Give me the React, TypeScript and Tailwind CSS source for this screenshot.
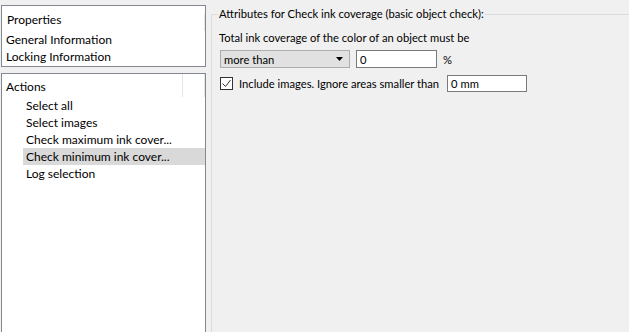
import React from "react";

const actions = [
  "Select all",
  "Select images",
  "Check maximum ink cover...",
  "Check minimum ink cover...",
  "Log selection",
];

export default function App() {
  return (
    <div className="w-[629px] h-[332px] bg-[#f0f0f0] flex overflow-hidden text-[12px] text-black font-['Lato',sans-serif] leading-[17px]">
      {/* Left column */}
      <div className="w-[206px] shrink-0 pl-px pt-[5px] flex flex-col gap-[6px]">
        <div className="h-[62px] bg-white border border-[#828790] relative">
          <div className="absolute right-0 top-[8px] h-[17px] w-px bg-[#e5e5e5]" />
          <div className="pl-[5px] pt-[5px]">Properties</div>
          <div className="pl-[4px] pt-[3px]">General Information</div>
          <div className="pl-[4px]">Locking Information</div>
        </div>
        <div className="flex-1 bg-white border border-b-0 border-[#828790]">
          <div className="flex h-[23px]">
            <div className="w-[181px] pl-[4px] pt-[4px] border-r border-[#e5e5e5]">Actions</div>
            <div className="flex-1 border-r border-[#e5e5e5]" />
          </div>
          <div className="flex flex-col">
            {actions.map((a, i) => (
              <div
                key={a}
                className={`ml-[21px] pl-[3px] h-[17px] leading-[18px] ${i === 3 ? "bg-[#d9d9d9]" : ""}`}
              >
                {a}
              </div>
            ))}
          </div>
        </div>
      </div>

      {/* Right side */}
      <div className="flex-1 pl-[5px] pt-[6px] text-[11.2px]">
        <fieldset className="w-[500px] h-[400px] border-t border-l border-[#dcdcdc] pl-[6px]">
          <legend className="px-px leading-[16px]">Attributes for Check ink coverage (basic object check):</legend>
          <div className="pl-[1px] pt-[7px]">Total ink coverage of the color of an object must be</div>
          <div className="flex items-center mt-[4px] ml-[2px]">
            <div className="w-[130px] h-[18px] bg-[#e1e1e1] border border-[#adadad] flex items-center justify-between pl-[3px] pr-[6px]">
              <span>more than</span>
              <svg width="7" height="4" viewBox="0 0 7 4">
                <path d="M0 0h7L3.5 4z" fill="#000" />
              </svg>
            </div>
            <div className="ml-[6px] w-[81px] h-[18px] bg-white border border-[#7a7a7a] pl-[3px] flex items-center">0</div>
            <span className="ml-[6px]">%</span>
          </div>
          <div className="flex items-center mt-[7px] ml-[2px]">
            <div className="w-[13px] h-[13px] border border-[#333] bg-white flex items-center justify-center">
              <svg width="11" height="11" viewBox="0 0 11 11">
                <path d="M1.5 5.5l3 3 5-6.5" stroke="#333" strokeWidth="1" fill="none" />
              </svg>
            </div>
            <span className="ml-[6px]">Include images. Ignore areas smaller than</span>
            <div className="ml-[8px] w-[80px] h-[17px] bg-white border border-[#7a7a7a] pl-[3px] flex items-center">0 mm</div>
          </div>
        </fieldset>
      </div>
    </div>
  );
}
